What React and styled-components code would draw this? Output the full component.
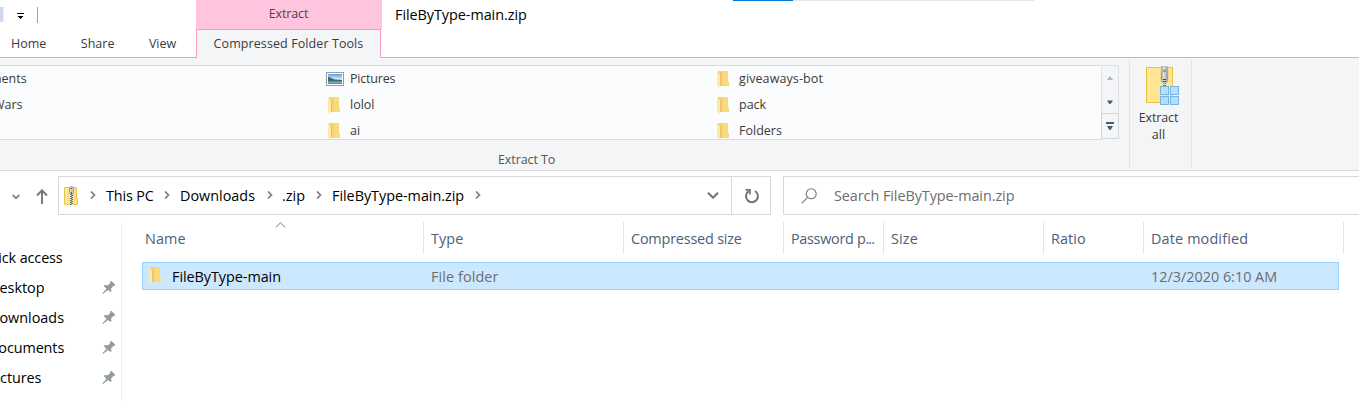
import React from "react";
import styled, { createGlobalStyle } from "styled-components";

const Global = createGlobalStyle`
  * { box-sizing: border-box; }
  html, body { margin: 0; padding: 0; background: #fff; overflow: hidden; }
  body { font-family: "Open Sans", "Noto Sans", sans-serif; color: #000; }
  svg { display: block; flex: none; }
`;

const Window = styled.div`
  width: 1359px;
  height: 401px;
  overflow: hidden;
  display: flex;
  flex-direction: column;
  background: #fff;
`;

const Label = styled.span`
  font-size: ${(p) => p.$size || 14.4}px;
  letter-spacing: ${(p) => p.$ls || 0}px;
  color: ${(p) => p.$color || "#000"};
  line-height: 20px;
  white-space: nowrap;
`;
const Dots = styled.span`
  letter-spacing: -0.9px;
`;

/* ---------- title bar and tabs ---------- */
const Header = styled.header`
  display: grid;
  grid-template-columns: 196px 186px 1fr;
  grid-template-rows: 29px 29px;
  flex: none;
`;
const QuickAccess = styled.div`
  display: flex;
  align-items: flex-start;
  padding-top: 7px;
`;
const Sliver = styled.div`
  width: 4px;
  height: 15px;
  background: linear-gradient(90deg, #cfdaec 75%, #e9eef7 75%);
`;
const Caret = styled.div`
  display: flex;
  margin: 6px 0 0 13px;
`;
const QuickDivider = styled.div`
  width: 1px;
  height: 16px;
  margin-left: 13px;
  background: #a0a0a0;
`;
const ContextGroup = styled.div`
  background: #ffc5de;
  display: flex;
  justify-content: center;
  padding: 4px 1px 0 0;
`;
const TitleArea = styled.div`
  display: flex;
  justify-content: space-between;
  padding-left: 13px;
`;
const TitleText = styled.div`
  padding-top: 3px;
`;
const Progress = styled.div`
  width: 301px;
  height: 1px;
  margin-right: 325px;
  background: linear-gradient(90deg, #0078d7 60px, #e5e5e5 60px);
`;
const Tabs = styled.nav`
  display: flex;
  padding: 5px 0 0 11px;
  gap: 34.5px;
  border-bottom: 1px solid #fc9bc2;
`;
const ActiveTab = styled.div`
  display: flex;
  justify-content: center;
  width: 185px;
  padding-top: 4px;
  background: #f4f5f7;
  border: 1px solid #fc9bc2;
  border-bottom: 0;
`;
const ActiveTabCell = styled.div`
  display: flex;
  background: linear-gradient(#fff 28px, #fc9bc2 28px);
`;
const TabRest = styled.div`
  border-bottom: 1px solid #fc9bc2;
`;

/* ---------- ribbon ---------- */
const Ribbon = styled.section`
  display: flex;
  flex: none;
  height: 113px;
  background: #f4f5f7;
  border-bottom: 1px solid #dadbdc;
`;
const ExtractTo = styled.div`
  display: flex;
  flex-direction: column;
  width: 1119px;
  padding-top: 7px;
`;
const GalleryRow = styled.div`
  display: flex;
  height: 75px;
`;
const Gallery = styled.div`
  display: grid;
  grid-template-columns: 326px 390px 385px;
  grid-auto-rows: 26px;
  width: 1101px;
  background: #fafcfe;
  border: solid #d9dadc;
  border-width: 1px 0;
  overflow: hidden;
`;
const GalleryItem = styled.div`
  display: flex;
  align-items: center;
  gap: 6px;
  margin-left: ${(p) => p.$shift || 0}px;
`;
const IconSlot = styled.div`
  display: flex;
  justify-content: center;
  width: 18px;
  padding-right: ${(p) => (p.$narrow ? 1 : 0)}px;
`;
const Scroller = styled.div`
  display: grid;
  grid-template-rows: 24px 24px 24px;
  width: 18px;
  height: 74px;
  border: 1px solid #e0e1e4;
`;
const ScrollButton = styled.div`
  display: flex;
  align-items: center;
  justify-content: center;
  box-shadow: ${(p) => (p.$raised ? "0 0 0 1px #d4d6da" : "none")};
`;
const GroupName = styled.div`
  padding: 7px 0 0 498px;
`;
const RibbonDivider = styled.div`
  width: 1px;
  height: 107px;
  margin: 2px 0 0 ${(p) => p.$left || 0}px;
  background: #e1e2e4;
`;
const ExtractAll = styled.div`
  display: flex;
  flex-direction: column;
  align-items: center;
  width: 61px;
  padding-top: 8px;
`;
const ZipSlot = styled.div`
  padding-left: 4px;
`;
const ExtractLines = styled.div`
  display: flex;
  flex-direction: column;
  align-items: center;
  margin: 3px 4px 0 0;
  span { line-height: 17px; }
`;

/* ---------- address bar ---------- */
const AddressRow = styled.section`
  display: flex;
  flex: none;
  height: 44px;
  padding-top: 5px;
`;
const NavButtons = styled.div`
  display: flex;
  align-items: center;
  width: 58px;
  padding: 2px 0 0 12px;
  gap: 16px;
`;
const AddressBox = styled.div`
  display: flex;
  align-items: center;
  width: 674px;
  height: 39px;
  padding: 0 12px 0 5px;
  border: 1px solid #d9d9d9;
`;
const Crumb = styled.div`
  display: flex;
  align-items: center;
  justify-content: space-between;
  width: ${(p) => p.$w}px;
  margin-right: ${(p) => p.$gap}px;
`;
const Push = styled.div`
  margin-left: auto;
`;
const Refresh = styled.div`
  display: flex;
  align-items: center;
  justify-content: center;
  width: 39px;
  height: 39px;
  padding-left: 2px;
  border: 1px solid #d9d9d9;
  border-left: 0;
`;
const Search = styled.div`
  display: flex;
  align-items: center;
  gap: 17px;
  flex: 1;
  height: 39px;
  margin-left: 12px;
  padding-left: 17px;
  border: 1px solid #d9d9d9;
  border-right: 0;
`;

/* ---------- content ---------- */
const Main = styled.main`
  display: flex;
  flex: 1;
  padding-top: 7px;
`;
const Sidebar = styled.aside`
  width: 122px;
  padding-top: 21px;
  border-right: 1px solid #f0f0f0;
`;
const SideItem = styled.div`
  display: flex;
  align-items: center;
  justify-content: space-between;
  height: 30px;
  padding-right: 6px;
`;
const Shifted = styled.div`
  margin-left: ${(p) => p.$x}px;
  display: flex;
`;
const Files = styled.div`
  flex: 1;
  padding-left: 20px;
`;
const Columns = styled.div`
  display: grid;
  grid-template-columns: 282px 200px 160px 100px 160px 100px 200px;
  height: 32px;
`;
const Column = styled.div`
  position: relative;
  display: flex;
  align-items: center;
  padding: 2px 0 0 ${(p) => (p.$first ? 3 : 7)}px;
  border-right: 1px solid #e5e5e5;
`;
const SortMark = styled.div`
  position: absolute;
  top: 0;
  left: 133px;
`;
const FileRow = styled.div`
  display: grid;
  grid-template-columns: 281px 720px 1fr;
  align-items: center;
  width: 1197px;
  height: 28px;
  margin-top: 8px;
  background: #cce8ff;
  border: 1px solid #99d1ff;
`;
const FileName = styled.div`
  display: flex;
  align-items: flex-start;
  gap: 10px;
  padding: 2px 0 0 6px;
`;
const Cell = styled.div`
  display: flex;
  padding: 2px 0 0 7px;
`;

const Folder = () => (
  <svg width="13" height="17" viewBox="0 0 13 17">
    <path d="M1 0H11V10L12 11V15H3L1 14Z" fill="#f5d276" />
    <path d="M6 0H11V10L12 11V15H6Z" fill="#fadb7c" />
    <path d="M3 2L4 3V15H3Z" fill="#e9c266" />
    <path d="M0 0.500L3 3.500V15.500L2.500 17L0 15Z" fill="#ffe9a8" />
  </svg>
);

const Picture = () => (
  <svg width="18" height="14" viewBox="0 0 18 14">
    <defs>
      <linearGradient id="sky" x1="0" y1="0" x2="0" y2="1">
        <stop offset="0" stopColor="#5b9be6" />
        <stop offset="0.5" stopColor="#d3ecf7" />
        <stop offset="1" stopColor="#4688b5" />
      </linearGradient>
    </defs>
    <rect x="0.5" y="0.5" width="17" height="13" fill="#fff" stroke="#9b9b9b" />
    <rect x="2" y="2" width="14" height="10" fill="url(#sky)" />
    <path d="M2 5C5 5 6 7 9 7.5L16 8V9.5H2Z" fill="#3e6b62" />
  </svg>
);

const Triangle = ({ color, up, bar }) => (
  <svg width="8" height={bar ? 8 : 4} viewBox={bar ? "0 0 8 8" : "0 0 8 4"}>
    {bar && <rect width="8" height="2" fill={color} />}
    <path d={up ? "M1 4L3.500 0.500H4.500L7 4Z" : bar ? "M1 4H7L4.500 8H3.500Z" : "M1 0.500H7L4.500 4H3.500Z"} fill={color} />
  </svg>
);

const ZipLarge = () => (
  <svg width="34" height="40" viewBox="0 0 34 40">
    <defs>
      <linearGradient id="pull" x1="0" x2="1">
        <stop offset="0" stopColor="#8d8d8d" />
        <stop offset="0.4" stopColor="#e6e6e6" />
        <stop offset="1" stopColor="#8f8f8f" />
      </linearGradient>
    </defs>
    <rect x="0.5" y="1.5" width="26" height="35" fill="#ffe593" stroke="#e9c33f" />
    <path d="M3.5 3V36" stroke="#fff0bd" />
    <path d="M18.5 17V22" stroke="#6f6f6f" strokeWidth="3" strokeDasharray="1 1" />
    <path d="M15.500 0.500H21.500L22 12Q22 17.500 18.500 17.500T15 12Z" fill="url(#pull)" stroke="#a0a0a0" strokeWidth="0.5" />
    <path d="M17 6V4.500L18.500 3L20 4.500V6Z" fill="#999" />
    <rect x="17" y="13" width="3" height="1" fill="#444" />
    <rect x="17" y="15" width="3" height="1" fill="#444" />
    {[[14, 20.5], [24, 20.5], [14, 30.5], [24, 30.5]].map(([x, y]) => (
      <rect key={x + "-" + y} x={x + 0.5} y={y} width="8" height="8" fill="#b3e0ff" stroke="#7ab4de" />
    ))}
  </svg>
);

const ZipSmall = () => (
  <svg width="15" height="20" viewBox="0 0 15 20">
    <path d="M0.500 1.500H12.500V12.500H13.500V18.500H0.500Z" fill="#ffe07d" stroke="#ecc64d" />
    <path d="M2.500 2V18" stroke="#fff0b8" />
    <path d="M7.500 8V19" stroke="#fff3c8" strokeWidth="3" />
    <path d="M6.500 8V19" stroke="#5f5f5f" strokeDasharray="1 1" />
    <path d="M8.500 9V19" stroke="#5f5f5f" strokeDasharray="1 1" />
    <path d="M7.500 8V19" stroke="#8a8a8a" />
    <path d="M6 1.500L7 0.500H8L9.500 1.500V6.500L8.500 8.500H6.500L5.500 6.500V1.500Z" fill="#c9ccd0" stroke="#8a8a8a" strokeWidth="0.8" />
    <rect x="7" y="2" width="1" height="1" fill="#333" />
    <rect x="7" y="6" width="1" height="2" fill="#555" />
  </svg>
);

const Chevron = () => (
  <svg width="6" height="9" viewBox="0 0 6 9">
    <path d="M1 0.500L4.500 4L1 7.500" fill="none" stroke="#7c7c7c" strokeWidth="1.700" />
  </svg>
);

const SmallDown = () => (
  <svg width="8" height="6" viewBox="0 0 8 6">
    <path d="M0.600 0.800L4 4.300L7.400 0.800" fill="none" stroke="#7c7c7c" strokeWidth="1.700" />
  </svg>
);

const Down = () => (
  <svg width="12" height="7" viewBox="0 0 12 7">
    <path d="M1 0.800L6 5.600L11 0.800" fill="none" stroke="#707070" strokeWidth="2" />
  </svg>
);

const UpArrow = () => (
  <svg width="12" height="15" viewBox="0 0 12 15">
    <path d="M6 15V1.500M1 6.500L6 1.300L11 6.500" fill="none" stroke="#767676" strokeWidth="1.900" />
  </svg>
);

const RefreshIcon = () => (
  <svg width="16" height="16" viewBox="0 0 16 16">
    <path d="M11 3A6 6 0 1 1 4.600 3.200" fill="none" stroke="#747474" strokeWidth="2" />
    <path d="M1.500 1.800H6V6.500" fill="none" stroke="#747474" strokeWidth="1.700" />
  </svg>
);

const Magnifier = () => (
  <svg width="16" height="16" viewBox="0 0 16 16">
    <circle cx="10.200" cy="5.800" r="5" fill="none" stroke="#777" strokeWidth="1.100" />
    <path d="M6.600 9.400L0.700 15.300" stroke="#777" strokeWidth="1.100" />
  </svg>
);

const Pin = () => (
  <svg width="13" height="14" viewBox="0 0 13 14">
    <path d="M8.500 0H9.500L13 3.500V4.500L11.500 5L9 7.500L9.500 10L8.500 11L6 9L1 13L0.300 12.500L4.500 7.700L2 5.300L2.500 4L6 4.200L8.300 2Z" fill="#919ba2" />
  </svg>
);

const gallery = [
  { text: "ments", shift: -10 }, { text: "Pictures", icon: <Picture />, ls: -0.2 }, { text: "giveaways-bot", folder: true, shift: -1, ls: 0.1 },
  { text: "Wars", shift: -7 }, { text: "lolol", folder: true }, { text: "pack", folder: true, shift: -1 },
  { text: "" }, { text: "ai", folder: true }, { text: "Folders", folder: true, shift: -1 },
];
const crumbs = [["This PC", 64, 10, -0.15], ["Downloads", 93, 9, 0], [".zip", 40, 10, 0], ["FileByType-main.zip", 149, 0, -0.03]];
const places = [["uick access", -10.500, -0.1], ["Desktop", -11, 0], ["Downloads", -11, 0], ["Documents", -12, -0.1], ["Pictures", -12, -0.1]];
const columns = [["Name", 0.1], ["Type", 0.1], ["Compressed size", -0.18], ["Password p", -0.3], ["Size", 0.15], ["Ratio", 0.1], ["Date modified", 0.15]];

export default function App() {
  return (
    <Window>
      <Global />
      <Header>
        <QuickAccess>
          <Sliver />
          <Caret>
            <svg width="7" height="6" viewBox="0 0 7 6"><path d="M0 0H7V1H0ZM0.500 3H6.500L3.500 6Z" fill="#000" /></svg>
          </Caret>
          <QuickDivider />
        </QuickAccess>
        <ContextGroup><Label $size={12.5} $ls={-0.1} $color="#5c3b4a">Extract</Label></ContextGroup>
        <TitleArea>
          <TitleText><Label $ls={-0.05}>FileByType-main.zip</Label></TitleText>
          <Progress />
        </TitleArea>
        <Tabs>
          {["Home", "Share", "View"].map((t) => <Label key={t} $size={12.5} $color="#3b3b3b">{t}</Label>)}
        </Tabs>
        <ActiveTabCell>
          <ActiveTab><Label $size={12.5} $ls={0.09} $color="#3b3b3b">Compressed Folder Tools</Label></ActiveTab>
        </ActiveTabCell>
        <TabRest />
      </Header>

      <Ribbon>
        <ExtractTo>
          <GalleryRow>
            <Gallery>
              {gallery.map((g, i) => (
                <GalleryItem key={i} $shift={g.shift}>
                  {g.icon && <IconSlot>{g.icon}</IconSlot>}
                  {g.folder && <IconSlot $narrow><Folder /></IconSlot>}
                  <Label $size={12.5} $ls={g.ls} $color="#3b3b3b">{g.text}</Label>
                </GalleryItem>
              ))}
            </Gallery>
            <Scroller>
              <ScrollButton><Triangle color="#adb3c2" up /></ScrollButton>
              <ScrollButton><Triangle color="#465a78" /></ScrollButton>
              <ScrollButton $raised><Triangle color="#465a78" bar /></ScrollButton>
            </Scroller>
          </GalleryRow>
          <GroupName><Label $size={12.5} $ls={-0.1} $color="#555">Extract To</Label></GroupName>
        </ExtractTo>
        <RibbonDivider $left={10} />
        <ExtractAll>
          <ZipSlot><ZipLarge /></ZipSlot>
          <ExtractLines>
            <Label $size={12.5} $ls={-0.1} $color="#3b3b3b">Extract</Label>
            <Label $size={12.5} $color="#3b3b3b">all</Label>
          </ExtractLines>
        </ExtractAll>
        <RibbonDivider />
      </Ribbon>

      <AddressRow>
        <NavButtons><SmallDown /><UpArrow /></NavButtons>
        <AddressBox>
          <Crumb $w={32} $gap={10}><ZipSmall /><Chevron /></Crumb>
          {crumbs.map(([t, w, gap, ls]) => (
            <Crumb key={t} $w={w} $gap={gap}><Label $ls={ls}>{t}</Label><Chevron /></Crumb>
          ))}
          <Push><Down /></Push>
        </AddressBox>
        <Refresh><RefreshIcon /></Refresh>
        <Search><Magnifier /><Label $ls={-0.06} $color="#6d6d6d">Search FileByType-main.zip</Label></Search>
      </AddressRow>

      <Main>
        <Sidebar>
          {places.map(([t, x, ls], i) => (
            <SideItem key={t}>
              <Shifted $x={x}><Label $ls={ls}>{t}</Label></Shifted>
              {i > 0 && <Pin />}
            </SideItem>
          ))}
        </Sidebar>
        <Files>
          <Columns>
            {columns.map(([c, ls], i) => (
              <Column key={c} $first={i === 0}>
                <Label $ls={ls} $color="#4c607a">{c}{i === 3 && <Dots>...</Dots>}</Label>
                {i === 0 && (
                  <SortMark><svg width="11" height="6" viewBox="0 0 11 6"><path d="M0.700 5.500L5.500 0.800L10.300 5.500" fill="none" stroke="#777" /></svg></SortMark>
                )}
              </Column>
            ))}
          </Columns>
          <FileRow>
            <FileName><Folder /><Label $ls={-0.05}>FileByType-main</Label></FileName>
            <Cell><Label $ls={0.1} $color="#6d6d6d">File folder</Label></Cell>
            <Cell><Label $color="#6d6d6d">12/3/2020 6:10 AM</Label></Cell>
          </FileRow>
        </Files>
      </Main>
    </Window>
  );
}
